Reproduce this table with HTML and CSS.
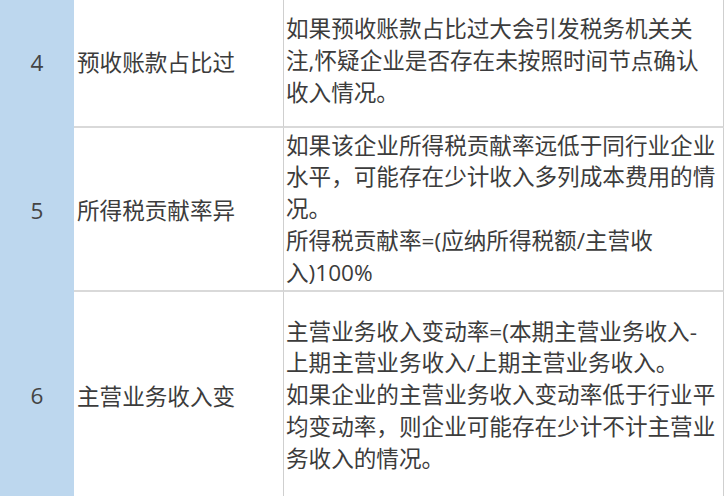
FILE: index.html
```html
<!DOCTYPE html>
<html lang="zh-CN">
<head>
<meta charset="utf-8">
<link rel="stylesheet" href="styles.css">
</head>
<body>
<div class="sheet">
  <div class="row r4">
    <div class="num">4</div>
    <div class="name">预收账款占比过</div>
    <div class="desc">如果预收账款占比过大会引发税务机关关<br>注,怀疑企业是否存在未按照时间节点确认<br>收入情况。</div>
  </div>
  <div class="row r5">
    <div class="num">5</div>
    <div class="name">所得税贡献率异</div>
    <div class="desc">如果该企业所得税贡献率远低于同行业企业<br>水平，可能存在少计收入多列成本费用的情<br>况。<br>所得税贡献率=(应纳所得税额/主营收<br>入)100%</div>
  </div>
  <div class="row r6">
    <div class="num">6</div>
    <div class="name">主营业务收入变</div>
    <div class="desc">主营业务收入变动率=(本期主营业务收入-<br>上期主营业务收入/上期主营业务收入。<br>如果企业的主营业务收入变动率低于行业平<br>均变动率，则企业可能存在少计不计主营业<br>务收入的情况。</div>
  </div>
</div>
</body>
</html>
```

FILE: styles.css
```css
html, body {
  margin: 0;
  padding: 0;
  background: #ffffff;
  overflow: hidden;
}

.sheet {
  width: 725px;
  height: 500px;
  margin-top: -4px;
  font-family: "Open Sans", "Noto Sans CJK SC", sans-serif;
  font-size: 22.6px;
  color: #3c3c3c;
}

.row {
  display: grid;
  grid-template-columns: 74px 210px 1fr;
}

.r4 { height: 132px; }
.r5 { height: 164px; }
.r6 { height: 208px; }

.num {
  background: #bdd7ee;
  display: flex;
  align-items: center;
  justify-content: center;
  color: #444444;
}

.name {
  display: flex;
  align-items: center;
  padding-left: 3px;
  border-bottom: 2px solid #d9d9d9;
  border-right: 1px solid #cfcfcf;
  white-space: nowrap;
  font-family: "Noto Sans CJK SC", sans-serif;
}

.desc {
  display: flex;
  align-items: center;
  padding-left: 2px;
  border-bottom: 2px solid #d9d9d9;
  border-right: 1px solid #cfcfcf;
  margin-right: 1px;
  line-height: 31.8px;
  white-space: nowrap;
}

.r6 .num,
.r6 .name,
.r6 .desc {
  border-bottom: 2px dashed #9a9a9a;
}
```
